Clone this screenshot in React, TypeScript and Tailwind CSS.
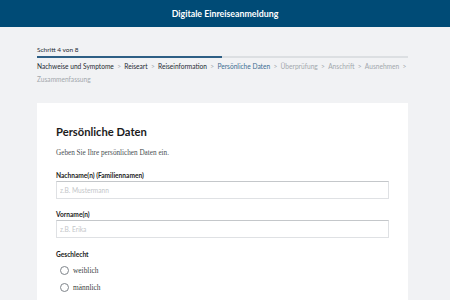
import React from "react";

const steps = [
  { label: "Nachweise und Symptome", state: "done" },
  { label: "Reiseart", state: "done" },
  { label: "Reiseinformation", state: "done" },
  { label: "Persönliche Daten", state: "current" },
  { label: "Überprüfung", state: "todo" },
  { label: "Anschrift", state: "todo" },
  { label: "Ausnehmen", state: "todo" },
  { label: "Zusammenfassung", state: "todo" },
];

const stepColor: Record<string, string> = {
  done: "text-[#1f2a33]",
  current: "text-[#3d6e92]",
  todo: "text-[#a3a8ad]",
};

const Field = ({ label, placeholder }: { label: string; placeholder: string }) => (
  <div className="flex flex-col">
    <label className="text-[6.6px] font-bold text-[#1b1b1b] leading-[10px] mb-[1px]">{label}</label>
    <input
      placeholder={placeholder}
      className="h-[18px] w-[333px] border border-[#dfe1e4] border-t-[#c4c7ca] bg-white px-[3px] text-[6.6px] placeholder:text-[#c3c6c9] outline-none"
    />
  </div>
);

const Radio = ({ label }: { label: string }) => (
  <label className="flex items-center gap-[4px] h-[17px] pl-[4px]">
    <span className="w-[9px] h-[9px] rounded-full border border-[#7f858b] bg-white" />
    <span className="text-[7.4px] text-[#3b3f44] font-['Liberation_Serif',serif]">{label}</span>
  </label>
);

export default function App() {
  return (
    <div className="w-[450px] h-[300px] overflow-hidden bg-[#f1f2f4] font-['Lato',sans-serif]">
      <header className="h-[27px] bg-[#004b76] flex items-center justify-center">
        <h1 className="text-white text-[8.8px] font-bold">Digitale Einreiseanmeldung</h1>
      </header>

      <div className="px-[37px] pt-[18px]">
        <div className="text-[6.5px] text-[#1f2a33] leading-[10px]">Schritt 4 von 8</div>
        <div className="mt-[1px] h-[2px] bg-[#dcdfe2] w-[371px]">
          <div className="h-full w-[185px] bg-[#2e5f85]" />
        </div>
        <div className="mt-[2px] text-[6.6px] leading-[13px] w-[375px]">
          {steps.map((s, i) => (
            <span key={s.label}>
              <span className={stepColor[s.state]}>{s.label}</span>
              {i < steps.length - 1 && <span className="text-[#a3a8ad] mx-[1.6px]"> &gt; </span>}
            </span>
          ))}
        </div>

        <main className="mt-[17px] bg-white w-[371px] h-[220px] px-[19px] pt-[21px]">
          <h2 className="text-[11.2px] font-bold text-[#1b1b1b] leading-[16px]">Persönliche Daten</h2>
          <p className="mt-[9px] text-[7.2px] leading-[8px] text-[#4a4f54] font-['Liberation_Serif',serif]">
            Geben Sie Ihre persönlichen Daten ein.
          </p>
          <div className="mt-[13px] flex flex-col gap-[10px]">
            <Field label="Nachname(n) (Familiennamen)" placeholder="z.B. Mustermann" />
            <Field label="Vorname(n)" placeholder="z.B. Erika" />
          </div>
          <div className="mt-[11px] text-[6.6px] font-bold text-[#1b1b1b] leading-[10px]">Geschlecht</div>
          <div className="mt-[3px] flex flex-col">
            <Radio label="weiblich" />
            <Radio label="männlich" />
            <Radio label="divers" />
          </div>
        </main>
      </div>
    </div>
  );
}
